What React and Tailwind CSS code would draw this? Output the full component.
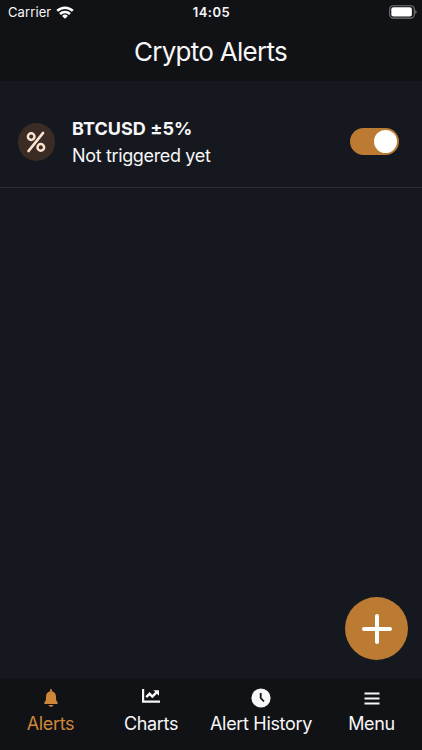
import { useState } from 'react';

const WifiIcon = () => (
    <svg width="18" height="13" viewBox="0 0 18 13" fill="none" stroke="#fff" strokeWidth="2.6">
        <path d="M1.2 4.9a11.2 11.2 0 0 1 15.6 0" />
        <path d="M4 8a7.2 7.2 0 0 1 10 0" />
        <path d="M9 12.8 6.1 9.9a4.1 4.1 0 0 1 5.8 0Z" fill="#fff" stroke="none" />
    </svg>
);

const BatteryIcon = () => (
    <svg width="28" height="14" viewBox="0 0 28 14">
        <rect x="0.7" y="0.7" width="24.6" height="12.4" rx="3.6" fill="none" stroke="#77787b" strokeWidth="1.1" />
        <rect x="2.3" y="2.3" width="20.6" height="9.2" rx="2" fill="#fff" />
        <path d="M26.3 4.9c1.7.6 1.7 3.4 0 4Z" fill="#77787b" />
    </svg>
);

const PercentIcon = () => (
    <svg width="20" height="22" viewBox="0 0 20 22" fill="none" stroke="#fbe3cf" strokeLinecap="round">
        <path d="M17 2 2.6 20" strokeWidth="2.8" />
        <circle cx="5.2" cy="5.6" r="3.3" strokeWidth="2.5" />
        <circle cx="14.8" cy="16.4" r="3.3" strokeWidth="2.5" />
    </svg>
);

const BellIcon = () => (
    <svg width="14" height="18" viewBox="0 0 14 18" fill="currentColor">
        <path d="M7 0c.6 0 .9.5.9 1.1v1.1c2.600.6 3.900 2.400 4 4.800l.3 4.200 1.400 2.300c.5.9.1 1.500-.8 1.500H1.200c-.9 0-1.300-.6-.8-1.500L1.800 11.200l.3-4.200C2.200 4.600 3.500 2.800 6.100 2.200V1.100C6.100.5 6.400 0 7 0Z" />
        <path d="M4.500 16h5C9 17.200 8.100 17.800 7 17.800S5 17.200 4.500 16Z" />
    </svg>
);

const ChartIcon = () => (
    <svg width="18" height="14" viewBox="0 0 18 14" fill="none" stroke="currentColor">
        <path d="M1.1 0v12.600H18" strokeWidth="2.200" />
        <path d="M4.200 8.200 7.600 4.800l2.800 2.800 4.400-4.400" strokeWidth="2.500" />
        <path d="M11.400 1.200H17V6.800Z" fill="currentColor" stroke="none" />
    </svg>
);

const ClockIcon = () => (
    <svg width="20" height="20" viewBox="0 0 20 20">
        <circle cx="10" cy="10" r="9.6" fill="currentColor" />
        <path d="M9.700 5v5l3.300 3.500" fill="none" stroke="#111216" strokeWidth="1.800" />
    </svg>
);

const MenuIcon = () => (
    <svg width="16" height="13" viewBox="0 0 16 13" stroke="currentColor" strokeWidth="1.8">
        <path d="M0.5 1.5h15M0.5 6.5h15M0.5 11.5h15" />
    </svg>
);

const TABS = [
    { id: 'alerts', label: 'Alerts', icon: <BellIcon />, width: 'w-[101px]' },
    { id: 'charts', label: 'Charts', icon: <ChartIcon />, width: 'w-[100px]', lift: 'pb-[4px]' },
    { id: 'history', label: 'Alert History', icon: <ClockIcon />, width: 'w-[120px]' },
    { id: 'menu', label: 'Menu', icon: <MenuIcon />, width: 'w-[101px]' },
];

const StatusBar = () => (
    <div className="grid grid-cols-3 items-center h-6 pl-2 pr-[5px] text-[13px] leading-6">
        <div className="flex items-center gap-[5px]">
            <span className="tracking-[0.1px]">Carrier</span>
            <WifiIcon />
        </div>
        <span className="text-center font-semibold tracking-[0.5px] pr-[2px]">14:05</span>
        <div className="flex justify-end pb-px">
            <BatteryIcon />
        </div>
    </div>
);

const AlertRow = ({ title, status }) => {
    const [enabled, setEnabled] = useState(true);

    return (
        <div className="flex items-center h-[107px] pt-[15px] pl-[18px] pr-[23px] border-b border-[#292c34]">
            <div className="flex items-center justify-center w-[37px] h-[38px] mt-px pr-px rounded-full bg-[#3a2c24]">
                <PercentIcon />
            </div>
            <div className="flex-1 ml-[17px] text-[18px] leading-[27px]">
                <p className="font-bold tracking-[0.05px]">{title}</p>
                <p className="tracking-[-0.35px]">{status}</p>
            </div>
            <button
                onClick={() => setEnabled(!enabled)}
                className={`flex items-center w-[49px] h-[27px] px-[2px] rounded-full ${enabled ? 'justify-end bg-[#bc7b33]' : 'justify-start bg-gray-700'}`}
            >
                <span className="w-[23px] h-[23px] rounded-full bg-white"></span>
            </button>
        </div>
    );
};

const App = () => {
    const [active, setActive] = useState('alerts');

    return (
        <div className="flex flex-col w-full h-screen overflow-hidden bg-[#15181f] text-[#f7f7f8] font-['Inter',sans-serif]">
            <header className="h-[81px] bg-[#111216]">
                <StatusBar />
                <h1 className="pr-px text-center text-[26px] leading-[56px] tracking-[-0.72px]">Crypto Alerts</h1>
            </header>

            <main className="flex flex-col flex-1">
                <AlertRow title="BTCUSD ±5%" status="Not triggered yet" />

                {/* New alert button */}
                <div className="flex flex-1 items-end justify-end pr-[14px] pb-[18px]">
                    <button className="flex items-center justify-center w-[63px] h-[63px] rounded-full bg-[#bc7b33]">
                        <svg width="32" height="32" viewBox="0 0 32 32" stroke="#fff" strokeWidth="4" strokeLinecap="round">
                            <path d="M16 3v26M3 16h26" />
                        </svg>
                    </button>
                </div>
            </main>

            <nav className="flex h-[72px] bg-[#111216]">
                {TABS.map((tab) => (
                    <button
                        key={tab.id}
                        onClick={() => setActive(tab.id)}
                        className={`flex flex-col items-center pt-[10px] ${tab.width} ${active === tab.id ? 'text-[#cf8639]' : 'text-[#f7f7f8]'}`}
                    >
                        <span className={`flex items-center h-5 ${tab.lift ?? ''}`}>{tab.icon}</span>
                        <span className="mt-[2px] text-[18px] leading-7 tracking-[-0.33px] whitespace-nowrap">{tab.label}</span>
                    </button>
                ))}
            </nav>
        </div>
    );
};

export default App;
